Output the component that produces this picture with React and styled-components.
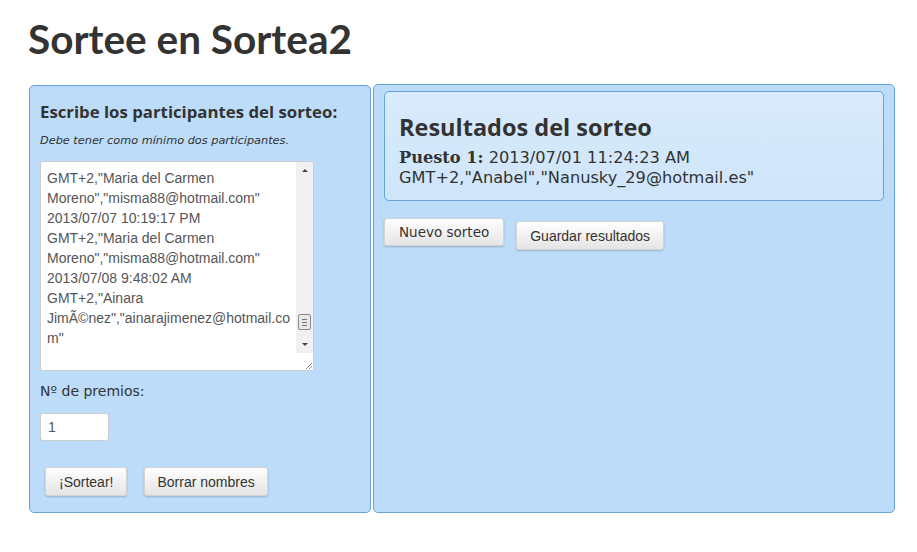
import React from 'react';
import styled, { createGlobalStyle } from 'styled-components';

const GlobalStyle = createGlobalStyle`
  body {
    margin: 0;
    background: #ffffff;
    color: #333333;
    font-family: "DejaVu Sans", Verdana, sans-serif;
  }
`;

const Page = styled.div`
  width: 917px;
  height: 552px;
  padding: 0 0 0 28px;
  box-sizing: border-box;
`;

const Title = styled.h1`
  margin: 0;
  padding-top: 15px;
  height: 84px;
  box-sizing: border-box;
  font-family: "Lato", "Open Sans", sans-serif;
  font-weight: bold;
  font-size: 40.5px;
  line-height: 48px;
  color: #333333;
`;

const Columns = styled.div`
  display: flex;
  gap: 2px;
  margin-left: 1px;
`;

const Panel = styled.section`
  box-sizing: border-box;
  width: ${(p) => p.$width}px;
  height: ${(p) => p.$height}px;
  margin-top: ${(p) => p.$top || 0}px;
  background: #bcdcf9;
  border: 1px solid #64a3dc;
  border-radius: 5px;
  padding: ${(p) => p.$pad};
`;

const PanelHeading = styled.h2`
  margin: 0;
  font-family: "Open Sans", "Lato", sans-serif;
  font-weight: bold;
  font-size: 16.8px;
  line-height: 20px;
  color: #333333;
`;

const Hint = styled.p`
  margin: 12px 0 0;
  font-size: 11.3px;
  font-style: italic;
  line-height: 14px;
  color: #333333;
`;

const FakeTextarea = styled.div`
  margin-top: 13px;
  width: 274px;
  height: 210px;
  box-sizing: border-box;
  background: #ffffff;
  border: 1px solid #cccccc;
  border-radius: 3px;
  display: flex;
  overflow: hidden;
`;

const TextareaText = styled.div`
  flex: 1;
  padding: 6px 0 0 6px;
  font-family: "Liberation Sans", Arial, sans-serif;
  font-size: 14px;
  line-height: 20px;
  color: #555555;
  white-space: pre;
`;

const Scrollbar = styled.div`
  width: 17px;
  display: flex;
  flex-direction: column;
  background: #f0f0f0;
`;

const ScrollArrow = styled.div`
  height: 17px;
  display: flex;
  align-items: center;
  justify-content: center;
  &::after {
    content: '';
    border-left: 3px solid transparent;
    border-right: 3px solid transparent;
    ${(p) => (p.$down ? 'border-top: 3px solid #444;' : 'border-bottom: 3px solid #444;')}
  }
`;

const ScrollTrack = styled.div`
  flex: 1;
  display: flex;
  flex-direction: column;
  justify-content: flex-end;
`;

const ScrollThumb = styled.div`
  height: 14px;
  margin: 0 2px 6px;
  background: #e8e8e8;
  border: 1px solid #8a8a8a;
  border-radius: 2px;
  display: flex;
  flex-direction: column;
  justify-content: center;
  gap: 2px;
  padding: 0 3px;
  & > span {
    height: 1px;
    background: #777;
  }
`;

const Grip = styled.div`
  height: 17px;
  background: #ffffff;
  display: flex;
  align-items: flex-end;
  justify-content: flex-end;
`;

const Label = styled.div`
  margin-top: 11px;
  font-size: 14px;
  line-height: 18px;
  color: #333333;
`;

const NumberInput = styled.div`
  margin-top: 13px;
  width: 69px;
  height: 28px;
  box-sizing: border-box;
  background: #ffffff;
  border: 1px solid #cccccc;
  border-radius: 3px;
  padding: 0 7px;
  font-family: "Liberation Sans", Arial, sans-serif;
  font-size: 14px;
  line-height: 26px;
  color: #555555;
`;

const ButtonRow = styled.div`
  display: flex;
  gap: ${(p) => p.$gap}px;
  margin: ${(p) => p.$margin};
  align-items: flex-start;
`;

const Button = styled.button`
  box-sizing: border-box;
  height: ${(p) => p.$h || 29}px;
  margin-top: ${(p) => p.$shift || 0}px;
  padding: 0 ${(p) => p.$px || 12}px;
  background: linear-gradient(#ffffff, #e4e4e4);
  border: 1px solid #d4d4d4;
  border-radius: 3px;
  box-shadow: 0 1px 2px rgba(0, 0, 0, 0.2);
  font-family: ${(p) => (p.$verdana ? '"DejaVu Sans", Verdana, sans-serif' : '"Liberation Sans", Arial, sans-serif')};
  font-size: ${(p) => p.$fs || 14}px;
  color: #333333;
`;

const ResultBox = styled.div`
  box-sizing: border-box;
  height: 110px;
  background: linear-gradient(#d9ebfc, #cfe5fa);
  border: 1px solid #64a3dc;
  border-radius: 5px;
  padding: 20px 14px 0;
`;

const ResultTitle = styled.h3`
  margin: 0;
  font-family: "Open Sans", "Lato", sans-serif;
  font-weight: bold;
  font-size: 23.5px;
  line-height: 30px;
  color: #333333;
`;

const ResultText = styled.p`
  margin: 6px 0 0;
  font-size: 16.2px;
  line-height: 20px;
  color: #333333;
  & strong {
    font-family: "DejaVu Serif", Georgia, serif;
  }
`;

const lines = [
  'GMT+2,"Maria del Carmen',
  'Moreno","misma88@hotmail.com"',
  '2013/07/07 10:19:17 PM',
  'GMT+2,"Maria del Carmen',
  'Moreno","misma88@hotmail.com"',
  '2013/07/08 9:48:02 AM',
  'GMT+2,"Ainara',
  'JimÃ©nez","ainarajimenez@hotmail.co',
  'm"',
].join('\n');

export default function App() {
  return (
    <Page>
      <GlobalStyle />
      <Title>Sortee en Sortea2</Title>
      <Columns>
        <Panel $width={342} $height={428} $top={1} $pad="16px 10px 0">
          <PanelHeading>Escribe los participantes del sorteo:</PanelHeading>
          <Hint>Debe tener como mínimo dos participantes.</Hint>
          <FakeTextarea>
            <TextareaText>{lines}</TextareaText>
            <Scrollbar>
              <ScrollArrow />
              <ScrollTrack>
                <ScrollThumb>
                  <span />
                  <span />
                  <span />
                </ScrollThumb>
              </ScrollTrack>
              <ScrollArrow $down />
              <Grip>
                <svg width="10" height="10" viewBox="0 0 10 10">
                  <path d="M9 3 L3 9 M9 6 L6 9" stroke="#888" strokeWidth="1" />
                </svg>
              </Grip>
            </Scrollbar>
          </FakeTextarea>
          <Label>Nº de premios:</Label>
          <NumberInput>1</NumberInput>
          <ButtonRow $gap={17} $margin="26px 0 0 5px">
            <Button $px={13}>¡Sortear!</Button>
            <Button $px={12}>Borrar nombres</Button>
          </ButtonRow>
        </Panel>
        <Panel $width={522} $height={429} $pad="6px 10px 0">
          <ResultBox>
            <ResultTitle>Resultados del sorteo</ResultTitle>
            <ResultText>
              <strong>Puesto 1:</strong> 2013/07/01 11:24:23 AM
              <br />
              GMT+2,"Anabel","Nanusky_29@hotmail.es"
            </ResultText>
          </ResultBox>
          <ButtonRow $gap={12} $margin="17px 0 0">
            <Button $verdana $h={28} $px={14} $fs={13.5}>Nuevo sorteo</Button>
            <Button $shift={3} $px={13}>Guardar resultados</Button>
          </ButtonRow>
        </Panel>
      </Columns>
    </Page>
  );
}
